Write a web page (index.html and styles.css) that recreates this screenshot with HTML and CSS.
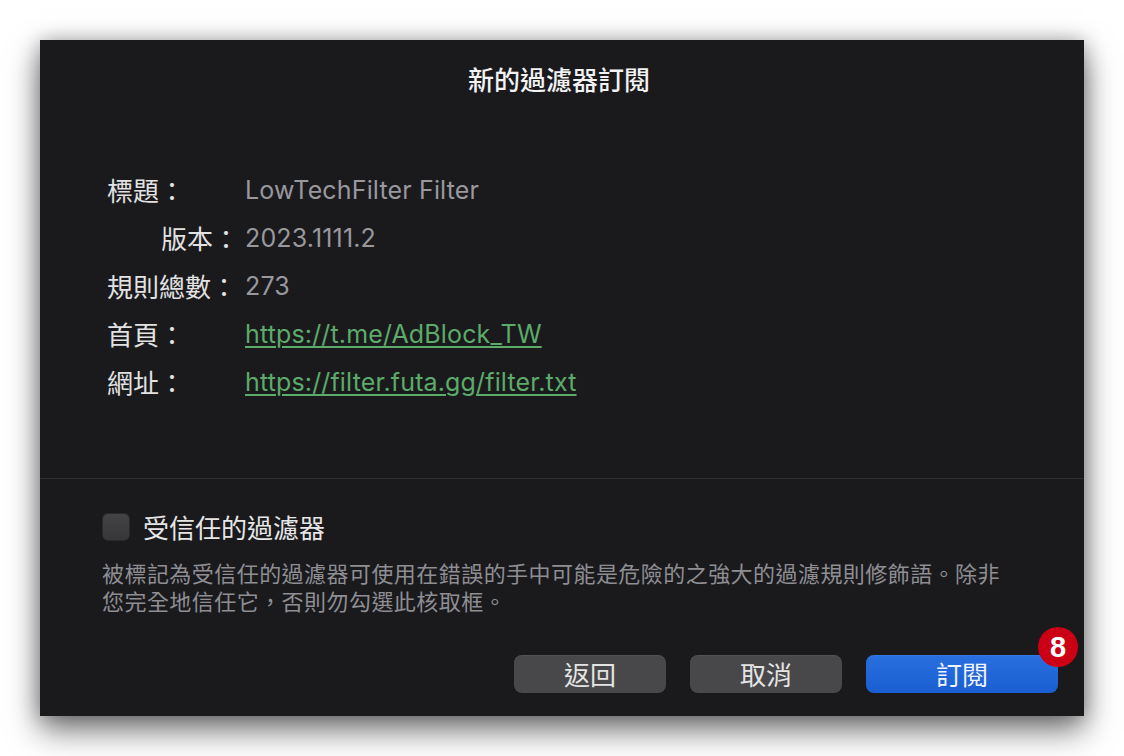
FILE: index.html
```html
<!DOCTYPE html>
<html lang="zh-Hant">
<head>
<meta charset="utf-8">
<title>新的過濾器訂閱</title>
<link rel="stylesheet" href="styles.css">
</head>
<body>
<div class="dialog">
  <h1 class="title">新的過濾器訂閱</h1>
  <div class="info">
    <div class="label">標題：</div><div class="value">LowTechFilter Filter</div>
    <div class="label right">版本：</div><div class="value">2023.1111.2</div>
    <div class="label">規則總數：</div><div class="value">273</div>
    <div class="label">首頁：</div><div class="value"><a class="link" href="#">https://t.me/AdBlock_TW</a></div>
    <div class="label">網址：</div><div class="value"><a class="link" href="#">https://filter.futa.gg/filter.txt</a></div>
  </div>
  <div class="divider"></div>
  <div class="lower">
    <label class="check-row"><span class="checkbox"></span><span class="check-label">受信任的過濾器</span></label>
    <p class="desc">被標記為受信任的過濾器可使用在錯誤的手中可能是危險的之強大的過濾規則修飾語。除非您完全地信任它，否則勿勾選此核取框。</p>
  </div>
  <div class="buttons">
    <button class="btn">返回</button>
    <button class="btn">取消</button>
    <button class="btn primary">訂閱<span class="badge">8</span></button>
  </div>
</div>
</body>
</html>
```

FILE: styles.css
```css
html, body {
  margin: 0;
  padding: 0;
  background: #ffffff;
}
body {
  width: 1124px;
  height: 756px;
  overflow: hidden;
  font-family: "Noto Sans CJK TC", "Noto Sans CJK SC", sans-serif;
}
.dialog {
  margin: 40px 0 0 40px;
  width: 1044px;
  height: 676px;
  background: #1a1a1d;
  box-shadow: 0 14px 30px rgba(0, 0, 0, 0.55), 0 0 18px rgba(0, 0, 0, 0.25);
  display: flex;
  flex-direction: column;
  box-sizing: border-box;
}
.title {
  margin: 22px 0 0 0;
  height: 34px;
  line-height: 34px;
  font-size: 26px;
  font-weight: 500;
  color: #f2f2f2;
  text-align: center;
  padding-right: 6px;
}
.info {
  margin: 70px 0 0 67px;
  display: grid;
  grid-template-columns: 132px auto;
  grid-auto-rows: 48px;
  column-gap: 6px;
  align-items: center;
}
.label {
  font-size: 26px;
  line-height: 48px;
  color: #e2e2e2;
  white-space: nowrap;
}
.label.right {
  text-align: right;
}
.value {
  font-family: "Inter", "Noto Sans CJK TC", sans-serif;
  font-size: 25px;
  letter-spacing: 0.15px;
  line-height: 48px;
  color: #98989d;
}
.link {
  color: #5cab6a;
  text-decoration: underline;
  text-decoration-thickness: 2px;
  text-underline-offset: 3px;
}
.divider {
  margin-top: 72px;
  height: 1px;
  background: #2e2e31;
}
.lower {
  padding: 34px 72px 0 62px;
}
.check-row {
  display: flex;
  align-items: center;
  gap: 13px;
  height: 28px;
}
.checkbox {
  width: 28px;
  height: 28px;
  border-radius: 6px;
  box-sizing: border-box;
  background: linear-gradient(#444447, #37373a);
  border: 1px solid #2a2a2c;
}
.check-label {
  font-size: 26px;
  color: #e6e6e6;
  line-height: 28px;
}
.desc {
  margin: 17px 0 0 0;
  font-size: 22px;
  letter-spacing: 0.45px;
  line-height: 28px;
  color: #8e8e93;
}
.buttons {
  margin-top: 41px;
  padding-right: 26px;
  display: flex;
  justify-content: flex-end;
  gap: 24px;
}
.btn {
  position: relative;
  width: 152px;
  height: 38px;
  border: none;
  border-radius: 8px;
  background: #48484b;
  color: #e4e4e4;
  font-family: "Noto Sans CJK TC", sans-serif;
  font-size: 26px;
  line-height: 36px;
  padding: 0;
  box-shadow: inset 0 1px 0 rgba(255, 255, 255, 0.06);
}
.btn.primary {
  width: 192px;
  background: linear-gradient(#2a6fe0, #1a5fd1);
  color: #f0f4ff;
}
.badge {
  position: absolute;
  top: -28px;
  right: -20px;
  width: 40px;
  height: 40px;
  border-radius: 50%;
  background: #cc0014;
  color: #ffffff;
  font-family: "Liberation Sans", Arial, sans-serif;
  font-weight: 700;
  font-size: 29px;
  line-height: 40px;
  text-align: center;
}
```
